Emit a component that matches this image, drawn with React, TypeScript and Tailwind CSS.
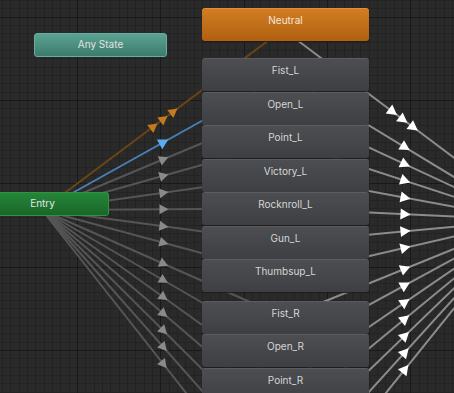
import React from "react";

type Pt = [number, number];

const W = 454;
const H = 393;

// state stack, top offsets in canvas px
const states = [
  { name: "Fist_L", top: 58 },
  { name: "Open_L", top: 92 },
  { name: "Point_L", top: 125 },
  { name: "Victory_L", top: 159 },
  { name: "Rocknroll_L", top: 192 },
  { name: "Gun_L", top: 226 },
  { name: "Thumbsup_L", top: 259 },
  { name: "Fist_R", top: 301 },
  { name: "Open_R", top: 334 },
  { name: "Point_R", top: 368 },
  { name: "Victory_R", top: 401 },
  { name: "Rocknroll_R", top: 435 },
  { name: "Gun_R", top: 468 },
  { name: "Thumbsup_R", top: 502 },
];

const cx = 285;
const cy = (top: number) => top + 16.5;
const entry: Pt = [42, 210];
const far: Pt = [525, 220];

function arrow(a: Pt, b: Pt, t = 0.5, shift = 0, len = 9, half = 5) {
  const dx = b[0] - a[0];
  const dy = b[1] - a[1];
  const d = Math.hypot(dx, dy);
  const ux = dx / d;
  const uy = dy / d;
  const px = a[0] + dx * t + ux * shift;
  const py = a[1] + dy * t + uy * shift;
  const tip = [px + ux * len * 0.55, py + uy * len * 0.55];
  const bx = px - ux * len * 0.45;
  const by = py - uy * len * 0.45;
  const p1 = [bx - uy * half, by + ux * half];
  const p2 = [bx + uy * half, by - ux * half];
  return [tip, p1, p2].map((p) => p.map((n) => n.toFixed(1)).join(",")).join(" ");
}

function Grid() {
  const minorX: number[] = [];
  const minorY: number[] = [];
  for (let x = 2; x < W; x += 25 / 3) minorX.push(Math.round(x));
  for (let y = 0; y < H; y += 25 / 3) minorY.push(Math.round(y));
  const majorX = [77, 160, 244, 327, 410];
  const majorY = [17, 100, 183, 267, 350];
  return (
    <g>
      {minorX.map((x) => (
        <rect key={"mx" + x} x={x} y={0} width={1} height={H} fill="#232323" />
      ))}
      {minorY.map((y) => (
        <rect key={"my" + y} x={0} y={y} width={W} height={1} fill="#232323" />
      ))}
      {majorX.map((x) => (
        <rect key={"Mx" + x} x={x} y={0} width={1} height={H} fill="#191919" />
      ))}
      {majorY.map((y) => (
        <rect key={"My" + y} x={0} y={y} width={W} height={1} fill="#191919" />
      ))}
    </g>
  );
}

function Edges() {
  const neutralA: Pt = [285, 31];
  const neutralB: Pt = [521, 208];
  const brownB: Pt = [285, 28];
  const blueB: Pt = [cx, cy(58)];
  return (
    <g>
      {/* entry -> states */}
      {states.slice(1).map((s) => {
        const b: Pt = [cx, cy(s.top)];
        return (
          <g key={"e" + s.name}>
            <line x1={entry[0]} y1={entry[1]} x2={b[0]} y2={b[1]} stroke="#555555" strokeWidth={2} />
            <polygon points={arrow(entry, b)} fill="#8a8a8a" />
          </g>
        );
      })}
      {/* states -> off-canvas target */}
      {states.map((s) => {
        const a: Pt = [cx, cy(s.top)];
        return (
          <g key={"r" + s.name}>
            <line x1={a[0]} y1={a[1]} x2={far[0]} y2={far[1]} stroke="#8c8c8c" strokeWidth={2} />
            <polygon points={arrow(a, far, 0.5, 0, 10, 5.5)} fill="#ffffff" />
          </g>
        );
      })}
      {/* neutral -> target, multiple transitions */}
      <line x1={neutralA[0]} y1={neutralA[1]} x2={neutralB[0]} y2={neutralB[1]} stroke="#8c8c8c" strokeWidth={2} />
      {[-13, 0, 13].map((sh) => (
        <polygon key={"n" + sh} points={arrow(neutralA, neutralB, 0.5, sh, 10, 5.5)} fill="#ffffff" />
      ))}
      {/* default transition */}
      <line x1={entry[0]} y1={entry[1]} x2={brownB[0]} y2={brownB[1]} stroke="#6a4614" strokeWidth={2} />
      {[-12.5, 0, 12.5].map((sh) => (
        <polygon key={"b" + sh} points={arrow(entry, brownB, 0.5, sh)} fill="#c47a1e" />
      ))}
      {/* selected */}
      <line x1={entry[0]} y1={entry[1]} x2={blueB[0]} y2={blueB[1]} stroke="#4a7fb5" strokeWidth={2} />
      <polygon points={arrow(entry, blueB, 0.5, 0, 10, 5.5)} fill="#5caaf2" />
    </g>
  );
}

function StateNode({ name, top }: { name: string; top: number }) {
  return (
    <div
      className="absolute left-[202px] w-[167px] h-[33px] rounded-[3px] border-t border-[#5a5c60] bg-linear-to-b from-[#4c4e52] to-[#3d3f42] shadow-[0_1px_1px_#1e1e1e] pt-[5px] text-center text-[10px] leading-[13px] text-[#d6d6d6]"
      style={{ top }}
    >
      {name}
    </div>
  );
}

export default function App() {
  return (
    <div className="relative w-[454px] h-[393px] overflow-hidden bg-[#2a2a2a] font-['Inter','Roboto',sans-serif]">
      <svg className="absolute inset-0" width={W} height={H} viewBox={`0 0 ${W} ${H}`}>
        <Grid />
        <Edges />
      </svg>

      <div className="absolute left-[34px] top-[33px] w-[133px] h-[24px] rounded-[3px] border border-[#66ad9d] bg-linear-to-b from-[#5aa393] to-[#3d7b6c] pt-[4px] text-center text-[10px] leading-[13px] text-[#e2e2e2]">
        Any State
      </div>

      <div className="absolute left-[-24px] top-[192px] w-[133px] h-[24px] rounded-[3px] border border-[#2e9440] bg-linear-to-b from-[#25863a] to-[#196628] pt-[4px] text-center text-[10px] leading-[13px] text-[#e6e6e6]">
        Entry
      </div>

      <div className="absolute left-[202px] top-[8px] w-[167px] h-[33px] rounded-[3px] border-t border-[#dd8f3c] bg-linear-to-b from-[#d37d22] to-[#b0600f] shadow-[0_1px_1px_#1e1e1e] pt-[5px] text-center text-[10px] leading-[13px] text-[#f2e8dc]">
        Neutral
      </div>

      {states.slice(0, 10).map((s) => (
        <StateNode key={s.name} name={s.name} top={s.top} />
      ))}
    </div>
  );
}
